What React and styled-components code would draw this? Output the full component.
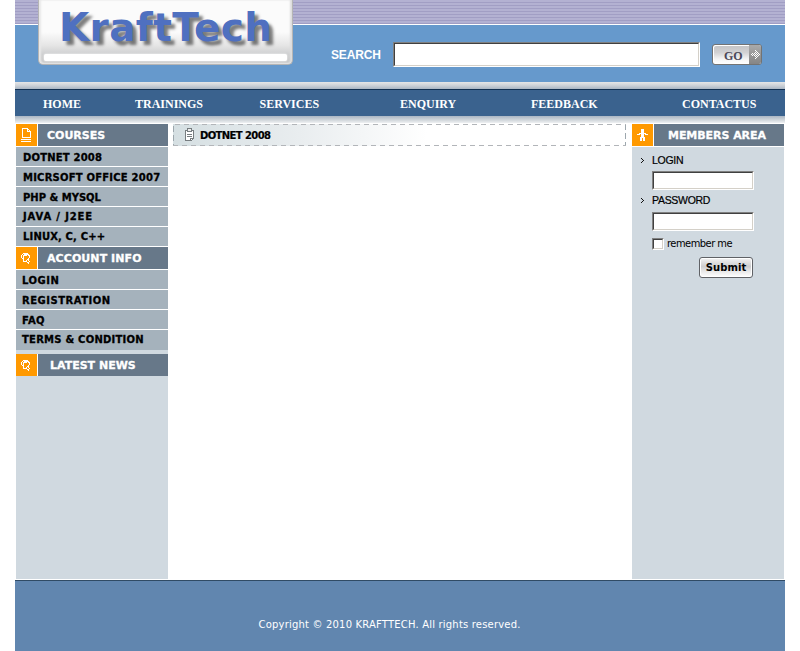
import React from "react";
import styled, { createGlobalStyle } from "styled-components";

const GlobalStyle = createGlobalStyle`
  * { box-sizing: border-box; }
  html, body { margin: 0; padding: 0; background: #fff; }
  body { overflow: hidden; }
`;

const verdana = `"DejaVu Sans", sans-serif`;

const Page = styled.div`
  width: 770px;
  height: 651px;
  margin-left: 15px;
  display: flex;
  flex-direction: column;
  font-family: ${verdana};
`;

const Header = styled.header`
  height: 82px;
  display: flex;
  padding-left: 23px;
  background:
    linear-gradient(#fff, #fff) 0 24px / 100% 1px no-repeat,
    repeating-linear-gradient(#b3b1d2 0 2px, #a19ec4 2px 3px) 0 0 / 100% 24px no-repeat,
    #6699cc;
`;

const LogoPanel = styled.div`
  width: 255px;
  height: 65px;
  padding: 0 5px 3px;
  display: flex;
  flex-direction: column;
  border-radius: 0 0 5px 5px;
  border: solid #b5b5b5;
  border-width: 0 1px 1px;
  background: linear-gradient(#fbfbfb 0 32px, #e6e6e6 45px, #cfd0d1 54px, #c6c6c6);
  box-shadow: inset 2px -1px 2px #e8e8e8, inset -2px 0 2px #ddd;
`;

const LogoText = styled.h1`
  margin: 0;
  height: 54px;
  padding-left: 15px;
  font-size: 39px;
  line-height: 56px;
  letter-spacing: 0.35px;
  white-space: nowrap;
  color: #4f70c0;
  text-shadow: 4px 4px 3px rgba(0, 0, 0, 0.5);
`;

const LogoBand = styled.div`
  height: 8px;
  border-radius: 2px;
  background: #fff;
  box-shadow: 0 0 2px #fff;
`;

const SearchForm = styled.form`
  display: flex;
  align-items: flex-start;
  padding: 42px 0 0 38px;
`;

const SearchLabel = styled.label`
  width: 62px;
  font: bold 12px/27px "Liberation Sans", sans-serif;
  letter-spacing: -0.15px;
  color: #fff;
`;

const SunkenBox = styled.div`
  width: ${(p) => p.$w}px;
  height: ${(p) => p.$h}px;
  border: 1px solid;
  border-color: #808080 #fff #fff #808080;
`;

const SunkenInput = styled.input`
  display: block;
  appearance: none;
  width: 100%;
  height: 100%;
  margin: 0;
  padding: 0 3px;
  border: 1px solid;
  border-color: #404040 #d4d0c8 #d4d0c8 #404040;
  border-radius: 0;
  outline: 0;
  background: #fff;
`;

const GoButton = styled.button`
  width: 50px;
  height: 21px;
  margin: 2px 0 0 12px;
  padding: 0;
  display: flex;
  overflow: hidden;
  border: 1px solid #737373;
  border-radius: 3px;
  background: linear-gradient(#c3c3c5, #d2d2d4 40%, #f5f5f5 75%, #fff);
  box-shadow: inset 1px 1px 0 #fff;
  color: #4a4658;
  font: bold 12px/23px "Liberation Serif", serif;
`;

const GoText = styled.span`
  width: 36px;
  padding-left: 11px;
  text-align: left;
`;

const GoArrow = styled.span`
  width: 12px;
  height: 19px;
  display: flex;
  align-items: center;
  justify-content: center;
  background: linear-gradient(#aaa, #858585);
`;

const SilverBar = styled.div`
  height: 7px;
  background: linear-gradient(#e6e6e7, #d0d4d9 45%, #a9b5c3);
`;

const Nav = styled.nav`
  height: 27px;
  padding-left: 28px;
  display: grid;
  grid-template-columns: 92px 124.5px 140.5px 131px 151px 1fr;
  border-top: 1px solid #122f50;
  background: #3a628e;
`;

const NavLink = styled.a`
  color: #fff;
  font: bold 12px/28px "Liberation Serif", serif;
  white-space: nowrap;
`;

const NavShadow = styled.div`
  height: 8px;
  background: linear-gradient(#aab6c4, #d5dade 55%, #eff1f3 7px, #fff 7px);
`;

const Body = styled.div`
  height: 456px;
  display: grid;
  grid-template-columns: 152px 453px 152px;
  column-gap: 5px;
  padding-left: 1px;
`;

const Side = styled.aside`
  height: 455px;
  width: 152px;
  background: #d0d9e0;
`;

const RightSide = styled(Side)`
  margin-left: 1px;
`;

const SectionTitle = styled.h2`
  margin: 0;
  height: ${(p) => (p.$last ? 22 : 23)}px;
  display: flex;
  color: #fff;
  font: bold 11px/23px ${verdana};
  letter-spacing: ${(p) => p.$ls}px;
  -webkit-text-stroke: 0.3px #fff;
  white-space: nowrap;
  background: #fff;
`;

const TitleIcon = styled.span`
  width: 21px;
  height: 22px;
  margin-right: 1px;
  background: #ff9900;
  svg { display: block; }
`;

const TitleText = styled.span`
  flex: 1;
  height: 22px;
  padding-left: ${(p) => p.$pad}px;
  background: #677889;
`;

const Menu = styled.ul`
  list-style: none;
  margin: 0;
  padding: 0;
`;

const MenuItem = styled.li`
  height: 20px;
  padding-left: ${(p) => p.$pad}px;
  border-bottom: 1px solid #fff;
  background: #a5b2bc;
  color: #000;
  font: bold 10px/${(p) => p.$lh}px ${verdana};
  letter-spacing: ${(p) => p.$ls}px;
  -webkit-text-stroke: 0.3px #000;
  white-space: nowrap;
`;

const AccountMenu = styled(Menu)`
  margin-bottom: 4px;
  li:last-child { border-bottom-color: #a5b2bc; }
`;

const ContentTitle = styled.h2`
  margin: 0;
  height: 22px;
  display: flex;
  padding-left: 11px;
  font: bold 10px/23px ${verdana};
  letter-spacing: -0.6px;
  -webkit-text-stroke: 0.2px #000;
  background:
    repeating-linear-gradient(90deg, #b2b5b9 0 5px, transparent 5px 9px) 2px 0 / 451px 1px no-repeat,
    repeating-linear-gradient(90deg, #b2b5b9 0 5px, transparent 5px 9px) 0 100% / 453px 1px no-repeat,
    repeating-linear-gradient(#9da7ad 0 6px, transparent 6px 9px) 0 2px / 1px 20px no-repeat,
    repeating-linear-gradient(#9da7ad 0 6px, transparent 6px 9px) 100% 0 / 1px 22px no-repeat,
    linear-gradient(90deg, #d5dfe2, #e9edef 28%, #fff 56%);
`;

const ContentText = styled.span`
  padding-left: 5px;
`;

const LoginForm = styled.form`
  padding: 4px 0 0 9px;
  display: grid;
  grid-template-columns: 11px 102px;
  grid-template-rows: 20px 20px 21px 20px 24px 22px;
`;

const FieldLabel = styled.label`
  font: 10.5px/19px "Liberation Sans", sans-serif;
  letter-spacing: -0.3px;
  -webkit-text-stroke: 0.2px #000;
`;

const FieldInput = styled.div`
  grid-column: 2;
`;

const Remember = styled.label`
  grid-column: 2;
  display: flex;
  align-items: center;
  gap: 3px;
  font: 11px/14px "DejaVu Sans Condensed", "DejaVu Sans", sans-serif;
  font-stretch: condensed;
  letter-spacing: -0.5px;
  white-space: nowrap;
`;

const RememberText = styled.span`
  height: 14px;
`;

const SubmitButton = styled.button`
  grid-column: 2;
  justify-self: end;
  width: 54px;
  height: 21px;
  margin: 1px 1px 0 0;
  padding: 0;
  border: 1px solid #606266;
  border-radius: 3px;
  background: linear-gradient(#f4f4f4, #cdcdcf 45%, #e8e8e8 70%, #fff);
  box-shadow: inset 0 0 0 1px #fff;
  color: #000;
  font: bold 10px/18px ${verdana};
  letter-spacing: 0.1px;
`;

const Footer = styled.footer`
  height: 71px;
  padding: 37px 0 0 243.5px;
  border-top: 1px solid #304b65;
  background: #6186af;
  color: #fff;
  font: 10px/14px ${verdana};
  letter-spacing: 0.19px;
  white-space: nowrap;
`;

const PageIcon = () => (
  <svg width="21" height="22" viewBox="0 0 21 22" fill="none" stroke="#fff" shapeRendering="crispEdges">
    <path d="M6.5 14V4.5H11.5L14.5 7.5V13.5H6M11.5 4V7.5H15M5 15.5H15M5 17.5H15" />
  </svg>
);

const headRows = [
  "..#####...",
  ".#.#####..",
  "#.####.##.",
  "#.#.....#.",
  "#.#.....#.",
  ".##....#..",
  "..#...##..",
  "..#..#.#..",
  "..####..#.",
  "......##..",
  ".......#..",
];

const HeadIcon = () => (
  <svg width="21" height="22" viewBox="0 0 21 22" fill="#fff" shapeRendering="crispEdges">
    {headRows.flatMap((row, y) =>
      [...row].map((c, x) =>
        c === "#" ? <rect key={`${x}-${y}`} x={x + 5} y={y + 6} width="1" height="1" /> : null
      )
    )}
  </svg>
);

const PersonIcon = () => (
  <svg width="21" height="22" viewBox="0 0 21 22" fill="#fff" shapeRendering="crispEdges">
    <path d="M9 5h3v3H9zM7 9h7v1H7zM5 10h3v1H5zM13 10h3v1h-3zM9 8h3v6H9zM8 13h2v4H8zM11 13h2v4h-2z" />
  </svg>
);

const ClipboardIcon = () => (
  <svg width="11" height="22" viewBox="0 -1 11 22" fill="none" stroke="#777d80" shapeRendering="crispEdges">
    <path fill="#fff" d="M1.5 5.5H9.5V13.5L7.5 15.5H1.5Z" />
    <path fill="#eee" d="M3.5 3.5H7.5V6.5H3.5Z" />
    <path d="M3 9.5H8M3 11.5H8M6.5 13V16M7 13.5H9" />
  </svg>
);

const Chevron = () => (
  <svg width="11" height="19" viewBox="0 0 11 19" fill="none" stroke="#111" shapeRendering="crispEdges">
    <path d="M0 7.5H1M1 8.5H2M2 9.5H3M1 10.5H2M0 11.5H1" />
  </svg>
);

const ArrowDots = () => {
  const dots = [];
  for (let y = 0; y < 9; y++) {
    const reach = 8 - Math.abs(4 - y);
    for (let x = 0; x <= reach; x++) {
      if ((x + y) % 2 === 0 && (x >= 4 || Math.abs(4 - y) < 2)) dots.push([x, y]);
    }
  }
  return (
    <svg width="9" height="9" viewBox="0 0 9 9" fill="#fff" shapeRendering="crispEdges">
      {dots.map(([x, y]) => <rect key={`${x}-${y}`} x={x} y={y} width="1" height="1" />)}
    </svg>
  );
};

const Sunken = ({ w, h, type = "text", label }) => (
  <SunkenBox $w={w} $h={h}>
    <SunkenInput type={type} aria-label={label} />
  </SunkenBox>
);

const navItems = ["HOME", "TRAININGS", "SERVICES", "ENQUIRY", "FEEDBACK", "CONTACTUS"];

/* label, letter spacing, line height */
const courses = [
  ["DOTNET 2008", 0.2, 21],
  ["MICRSOFT OFFICE 2007", 0.22, 21],
  ["PHP & MYSQL", 0, 21],
  ["JAVA / J2EE", 0.85, 20],
  ["LINUX, C, C++", 0.15, 20],
];
const account = [
  ["LOGIN", 0.5, 21],
  ["REGISTRATION", 0.5, 21],
  ["FAQ", 0.3, 21],
  ["TERMS & CONDITION", 0.24, 20],
];

const Section = ({ icon, text, pad, ls = 0, last }) => (
  <SectionTitle $ls={ls} $last={last}>
    <TitleIcon>{icon}</TitleIcon>
    <TitleText $pad={pad}>{text}</TitleText>
  </SectionTitle>
);

export default function App() {
  return (
    <>
      <GlobalStyle />
      <Page>
        <Header>
          <LogoPanel>
            <LogoText>KraftTech</LogoText>
            <LogoBand />
          </LogoPanel>
          <SearchForm>
            <SearchLabel>SEARCH</SearchLabel>
            <Sunken w={307} h={25} label="Search" />
            <GoButton type="button">
              <GoText>GO</GoText>
              <GoArrow><ArrowDots /></GoArrow>
            </GoButton>
          </SearchForm>
        </Header>
        <SilverBar />
        <Nav>
          {navItems.map((t) => <NavLink key={t}>{t}</NavLink>)}
        </Nav>
        <NavShadow />
        <Body>
          <Side>
            <Section icon={<PageIcon />} text="COURSES" pad={9} />
            <Menu>
              {courses.map(([t, ls, lh]) => <MenuItem key={t} $pad={7} $ls={ls} $lh={lh}>{t}</MenuItem>)}
            </Menu>
            <Section icon={<HeadIcon />} text="ACCOUNT INFO" pad={9} ls={0.08} />
            <AccountMenu>
              {account.map(([t, ls, lh]) => <MenuItem key={t} $pad={6} $ls={ls} $lh={lh}>{t}</MenuItem>)}
            </AccountMenu>
            <Section icon={<HeadIcon />} text="LATEST NEWS" pad={12} last />
          </Side>
          <main>
            <ContentTitle>
              <ClipboardIcon />
              <ContentText>DOTNET 2008</ContentText>
            </ContentTitle>
          </main>
          <RightSide>
            <Section icon={<PersonIcon />} text="MEMBERS AREA" pad={14} ls={-0.05} />
            <LoginForm>
              <Chevron />
              <FieldLabel>LOGIN</FieldLabel>
              <FieldInput><Sunken w={102} h={19} label="Login" /></FieldInput>
              <Chevron />
              <FieldLabel>PASSWORD</FieldLabel>
              <FieldInput><Sunken w={102} h={19} type="password" label="Password" /></FieldInput>
              <Remember>
                <Sunken w={12} h={12} type="checkbox" label="remember me" />
                <RememberText>remember me</RememberText>
              </Remember>
              <SubmitButton type="button">Submit</SubmitButton>
            </LoginForm>
          </RightSide>
        </Body>
        <Footer>Copyright © 2010 KRAFTTECH. All rights reserved.</Footer>
      </Page>
    </>
  );
}
